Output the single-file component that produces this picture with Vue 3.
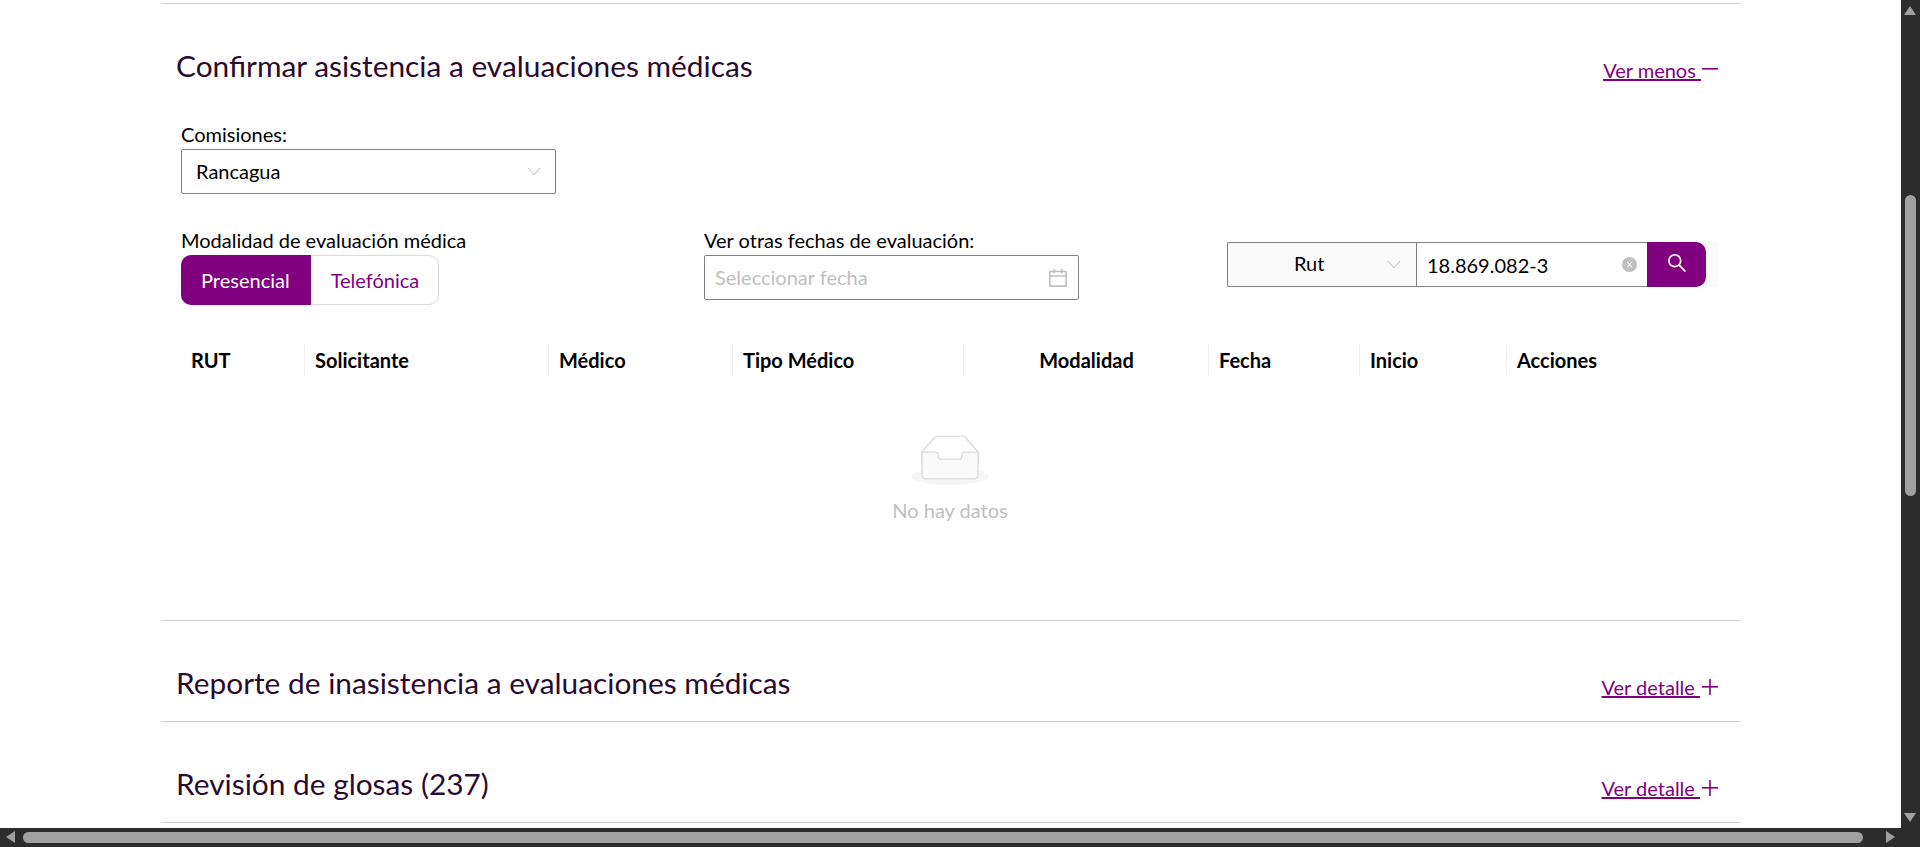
<template>
  <div class="page">
    <div class="content">

      <!-- Confirmar asistencia -->
      <section class="panel panel--open">
        <div class="panel-head">
          <h2 class="panel-title">Confirmar asistencia a evaluaciones médicas</h2>
          <a class="panel-link">
            <span class="panel-link-text">Ver menos&nbsp;</span>
            <svg class="panel-link-icon" width="16" height="16" viewBox="0 0 16 16">
              <rect x="0" y="7" width="16" height="1.6" fill="#800080" />
            </svg>
          </a>
        </div>

        <div class="panel-body">
          <label class="field-label">Comisiones:</label>
          <div class="select-box">
            <span class="select-text">Rancagua</span>
            <svg class="chevron" width="14" height="9" viewBox="0 0 14 9" fill="none" stroke="#bfbfbf" stroke-width="1">
              <polyline points="1,1 7,8 13,1" />
            </svg>
          </div>

          <div class="filters">
            <div class="filter-col">
              <label class="field-label">Modalidad de evaluación médica</label>
              <div class="segment">
                <div class="segment-btn segment-btn--on">Presencial</div>
                <div class="segment-btn">Telefónica</div>
              </div>
            </div>

            <div class="filter-col">
              <label class="field-label">Ver otras fechas de evaluación:</label>
              <div class="date-box">
                <span class="select-text date-placeholder">Seleccionar fecha</span>
                <svg width="20" height="20" viewBox="64 64 896 896" fill="#bfbfbf">
                  <path d="M880 184H712v-64c0-4.4-3.6-8-8-8h-56c-4.4 0-8 3.6-8 8v64H384v-64c0-4.4-3.6-8-8-8h-56c-4.4 0-8 3.6-8 8v64H144c-17.7 0-32 14.3-32 32v664c0 17.7 14.3 32 32 32h736c17.7 0 32-14.3 32-32V216c0-17.7-14.3-32-32-32zm-40 656H184V460h656v380zM184 392V256h128v48c0 4.4 3.6 8 8 8h56c4.4 0 8-3.6 8-8v-48h256v48c0 4.4 3.6 8 8 8h56c4.4 0 8-3.6 8-8v-48h128v136H184z" />
                </svg>
              </div>
            </div>

            <div class="search-wrap">
              <div class="search-type">
                <span class="search-type-text">Rut</span>
                <svg class="chevron" width="14" height="9" viewBox="0 0 14 9" fill="none" stroke="#bfbfbf" stroke-width="1">
                  <polyline points="1,1 7,8 13,1" />
                </svg>
              </div>
              <div class="search-input">
                <span>18.869.082-3</span>
                <svg width="15" height="15" viewBox="64 64 896 896" fill="#bfbfbf">
                  <path d="M512 64C264.6 64 64 264.6 64 512s200.6 448 448 448 448-200.6 448-448S759.4 64 512 64zm165.4 618.2l-66-.3L512 563.4l-99.3 118.4-66.1.3c-4.4 0-8-3.5-8-8 0-1.9.7-3.7 1.9-5.2l130.1-155L340.5 359a8.32 8.32 0 0 1-1.9-5.2c0-4.4 3.6-8 8-8l66.1.3L512 464.6l99.3-118.4 66-.3c4.4 0 8 3.5 8 8 0 1.9-.7 3.7-1.9 5.2L553.5 514l130 155c1.2 1.5 1.9 3.3 1.9 5.2 0 4.4-3.6 8-8 8z" />
                </svg>
              </div>
              <button class="search-btn">
                <svg width="20" height="20" viewBox="64 64 896 896" fill="#fff">
                  <path d="M909.6 854.5L649.9 594.8C690.2 542.7 712 479 712 412c0-80.2-31.3-155.4-87.9-212.1-56.6-56.7-132-87.9-212.1-87.9s-155.5 31.3-212.1 87.9C143.2 256.5 112 331.8 112 412c0 80.1 31.3 155.5 87.9 212.1C256.5 680.8 331.8 712 412 712c67 0 130.6-21.8 182.7-62l259.7 259.6a8.2 8.2 0 0 0 11.6 0l43.6-43.5a8.2 8.2 0 0 0 0-11.6zM570.4 570.4C528 612.7 471.8 636 412 636s-116-23.3-158.4-65.6C211.3 528 188 471.8 188 412s23.3-116.1 65.6-158.4C296 211.3 352.2 188 412 188s116.1 23.2 158.4 65.6S636 352.2 636 412s-23.3 116.1-65.6 158.4z" />
                </svg>
              </button>
            </div>
          </div>

          <div class="table-head">
            <div v-for="col in columns" :key="col.label" class="th" :class="{ 'th--center': col.center }">{{ col.label }}</div>
          </div>

          <div class="empty">
            <svg width="78" height="50" viewBox="0 0 64 41">
              <g transform="translate(0 1)" fill="none" fill-rule="evenodd">
                <ellipse fill="#f5f5f5" cx="32" cy="33" rx="32" ry="7" />
                <g fill-rule="nonzero" stroke="#d9d9d9">
                  <path d="M55 12.76L44.854 1.258C44.367.474 43.656 0 42.907 0H21.093c-.749 0-1.46.474-1.947 1.257L9 12.761V22h46v-9.24z" />
                  <path d="M41.613 15.931c0-1.605.994-2.93 2.227-2.931H55v18.137C55 33.26 53.68 35 52.05 35h-40.1C10.32 35 9 33.259 9 31.137V13h11.16c1.233 0 2.227 1.323 2.227 2.928v.022c0 1.605 1.005 2.901 2.237 2.901h14.752c1.232 0 2.237-1.308 2.237-2.913v-.007z" fill="#fafafa" />
                </g>
              </g>
            </svg>
            <p class="empty-text">No hay datos</p>
          </div>
        </div>
      </section>

      <!-- Collapsed panels -->
      <section v-for="p in collapsed" :key="p" class="panel">
        <div class="panel-head panel-head--closed">
          <h2 class="panel-title">{{ p }}</h2>
          <a class="panel-link">
            <span class="panel-link-text">Ver detalle&nbsp;</span>
            <svg class="panel-link-icon" width="16" height="16" viewBox="0 0 16 16">
              <rect x="0" y="7" width="16" height="1.6" fill="#800080" />
              <rect x="7.2" y="0" width="1.6" height="16" fill="#800080" />
            </svg>
          </a>
        </div>
      </section>
      <div class="panel-end"></div>
    </div>

    <!-- Scrollbars of the window -->
    <div class="sb sb--v">
      <span class="sb-arrow sb-arrow--up"></span>
      <span class="sb-thumb sb-thumb--v"></span>
      <span class="sb-arrow sb-arrow--down"></span>
    </div>
    <div class="sb sb--h">
      <span class="sb-arrow sb-arrow--left"></span>
      <span class="sb-thumb sb-thumb--h"></span>
      <span class="sb-arrow sb-arrow--right"></span>
    </div>
  </div>
</template>

<script setup>
const columns = [
  { label: 'RUT' },
  { label: 'Solicitante' },
  { label: 'Médico' },
  { label: 'Tipo Médico' },
  { label: 'Modalidad', center: true },
  { label: 'Fecha' },
  { label: 'Inicio' },
  { label: 'Acciones' },
]

const collapsed = [
  'Reporte de inasistencia a evaluaciones médicas',
  'Revisión de glosas (237)',
]
</script>

<style>
html, body { margin: 0; overflow: hidden; background: #fff; }
</style>

<style scoped>
.page {
  position: relative;
  width: 1920px;
  height: 847px;
  overflow: hidden;
  font-family: 'Lato', sans-serif;
  color: #000;
  background: #fff;
}

.content {
  width: 1579px;
  margin-left: 161px;
  padding-top: 3px;
}

.panel { border-top: 1px solid #d0d0d0; }
.panel--open { height: 617px; border-top-width: 1.5px; box-sizing: border-box; }
.panel-end { border-top: 1px solid #d0d0d0; }

.panel-head {
  display: flex;
  justify-content: space-between;
  align-items: flex-start;
  padding: 45px 22px 0 15px;
}
.panel-head--closed {
  height: 100px;
  box-sizing: border-box;
}

.panel-title {
  margin: 0;
  font-size: 29.85px;
  font-weight: 400;
  line-height: 34px;
  color: #2a0a2e;
}

.panel-link {
  display: flex;
  align-items: center;
  color: #800080;
  font-size: 20px;
  line-height: 24px;
  margin-top: 9px;
}
.panel--open .panel-link { margin-top: 9px; }
.panel-link-text { text-decoration: underline; }
.panel-link-icon { margin-left: 1px; margin-top: -2px; }
.panel-head--closed .panel-link-icon { margin-left: 2px; margin-top: 0; }

.panel-body { padding: 41px 35px 0 20px; }

.field-label {
  display: block;
  font-size: 20px;
  line-height: 20px;
  margin-bottom: 5px;
}

.select-box,
.date-box {
  width: 375px;
  height: 45px;
  box-sizing: border-box;
  border: 1px solid #808080;
  border-radius: 2px;
  display: flex;
  align-items: center;
  justify-content: space-between;
  font-size: 20px;
}
.select-box { padding: 0 14px; }
.date-box { padding: 0 10px 0 10px; }
.select-text { margin-top: -2px; }
.date-placeholder { color: #bfbfbf; }

.filters {
  display: grid;
  grid-template-columns: 523px 523px 1fr;
  margin-top: 36px;
}

.segment {
  display: inline-flex;
  height: 50px;
  box-sizing: border-box;
  border: 1px solid #d9d9d9;
  border-radius: 10px;
}
.segment-btn {
  display: flex;
  align-items: center;
  padding: 0 19px 0 20px;
  font-size: 20px;
  color: #800080;
}
.segment-btn--on {
  background: #800080;
  color: #fff;
  padding: 0 21px 0 20px;
  margin: -1px 0 -1px -1px;
  border-radius: 10px 0 0 10px;
}

.search-wrap {
  display: flex;
  height: 45px;
  margin-top: 12px;
  width: 491px;
  background: #fafafa;
}
.search-type {
  width: 189px;
  box-sizing: border-box;
  border: 1px solid #808080;
  border-right: none;
  border-radius: 2px 0 0 2px;
  background: #fafafa;
  display: flex;
  align-items: center;
  justify-content: space-between;
  padding: 0 15px 0 66px;
  font-size: 20px;
}
.search-type-text { margin-top: -3px; }
.search-input {
  width: 231px;
  box-sizing: border-box;
  border: 1px solid #808080;
  border-right: none;
  background: #fff;
  display: flex;
  align-items: center;
  justify-content: space-between;
  padding: 0 10px 0 10px;
  font-size: 20px;
}
.search-btn {
  width: 59px;
  height: 45px;
  padding: 0 0 3px;
  border: none;
  border-radius: 0 10px 10px 0;
  background: #800080;
  display: flex;
  align-items: center;
  justify-content: center;
}

.table-head {
  display: grid;
  grid-template-columns: 124px 244px 184px 231px 245px 151px 147px 1fr;
  margin-top: 39px;
}
.th {
  position: relative;
  height: 32px;
  padding: 0 10px;
  font-size: 20px;
  font-weight: 700;
  line-height: 33px;
  white-space: nowrap;
}
.th--center { text-align: center; }
.th:not(:last-child)::after {
  content: '';
  position: absolute;
  right: 0;
  top: 0;
  bottom: 0;
  width: 1px;
  background: #f0f0f0;
}

.empty {
  display: flex;
  flex-direction: column;
  align-items: center;
  margin-top: 59px;
  width: 1538px;
}
.empty svg { display: block; }
.empty-text {
  margin: 14px 0 0;
  font-size: 20px;
  line-height: 22px;
  color: #bfbfbf;
}

/* window scrollbars */
.sb { position: absolute; background: #2c2c2c; }
.sb--v { top: 0; right: 0; width: 19px; height: 828px; }
.sb--h { left: 0; bottom: 0; width: 1920px; height: 19px; }
.sb-thumb { position: absolute; background: #a0a0a0; border-radius: 6px; }
.sb-thumb--v { left: 4px; top: 195px; width: 11px; height: 301px; }
.sb-thumb--h { left: 23px; top: 4px; width: 1840px; height: 11px; }
.sb-arrow { position: absolute; width: 0; height: 0; border-style: solid; border-color: transparent; }
.sb-arrow--up { left: 3px; top: 6px; border-width: 0 6.5px 9px; border-bottom-color: #a0a0a0; }
.sb-arrow--down { left: 3px; top: 813px; border-width: 9px 6.5px 0; border-top-color: #a0a0a0; }
.sb-arrow--left { left: 6px; top: 3px; border-width: 6.5px 9px 6.5px 0; border-right-color: #a0a0a0; }
.sb-arrow--right { left: 1886px; top: 3px; border-width: 6.5px 0 6.5px 9px; border-left-color: #a0a0a0; }
</style>
